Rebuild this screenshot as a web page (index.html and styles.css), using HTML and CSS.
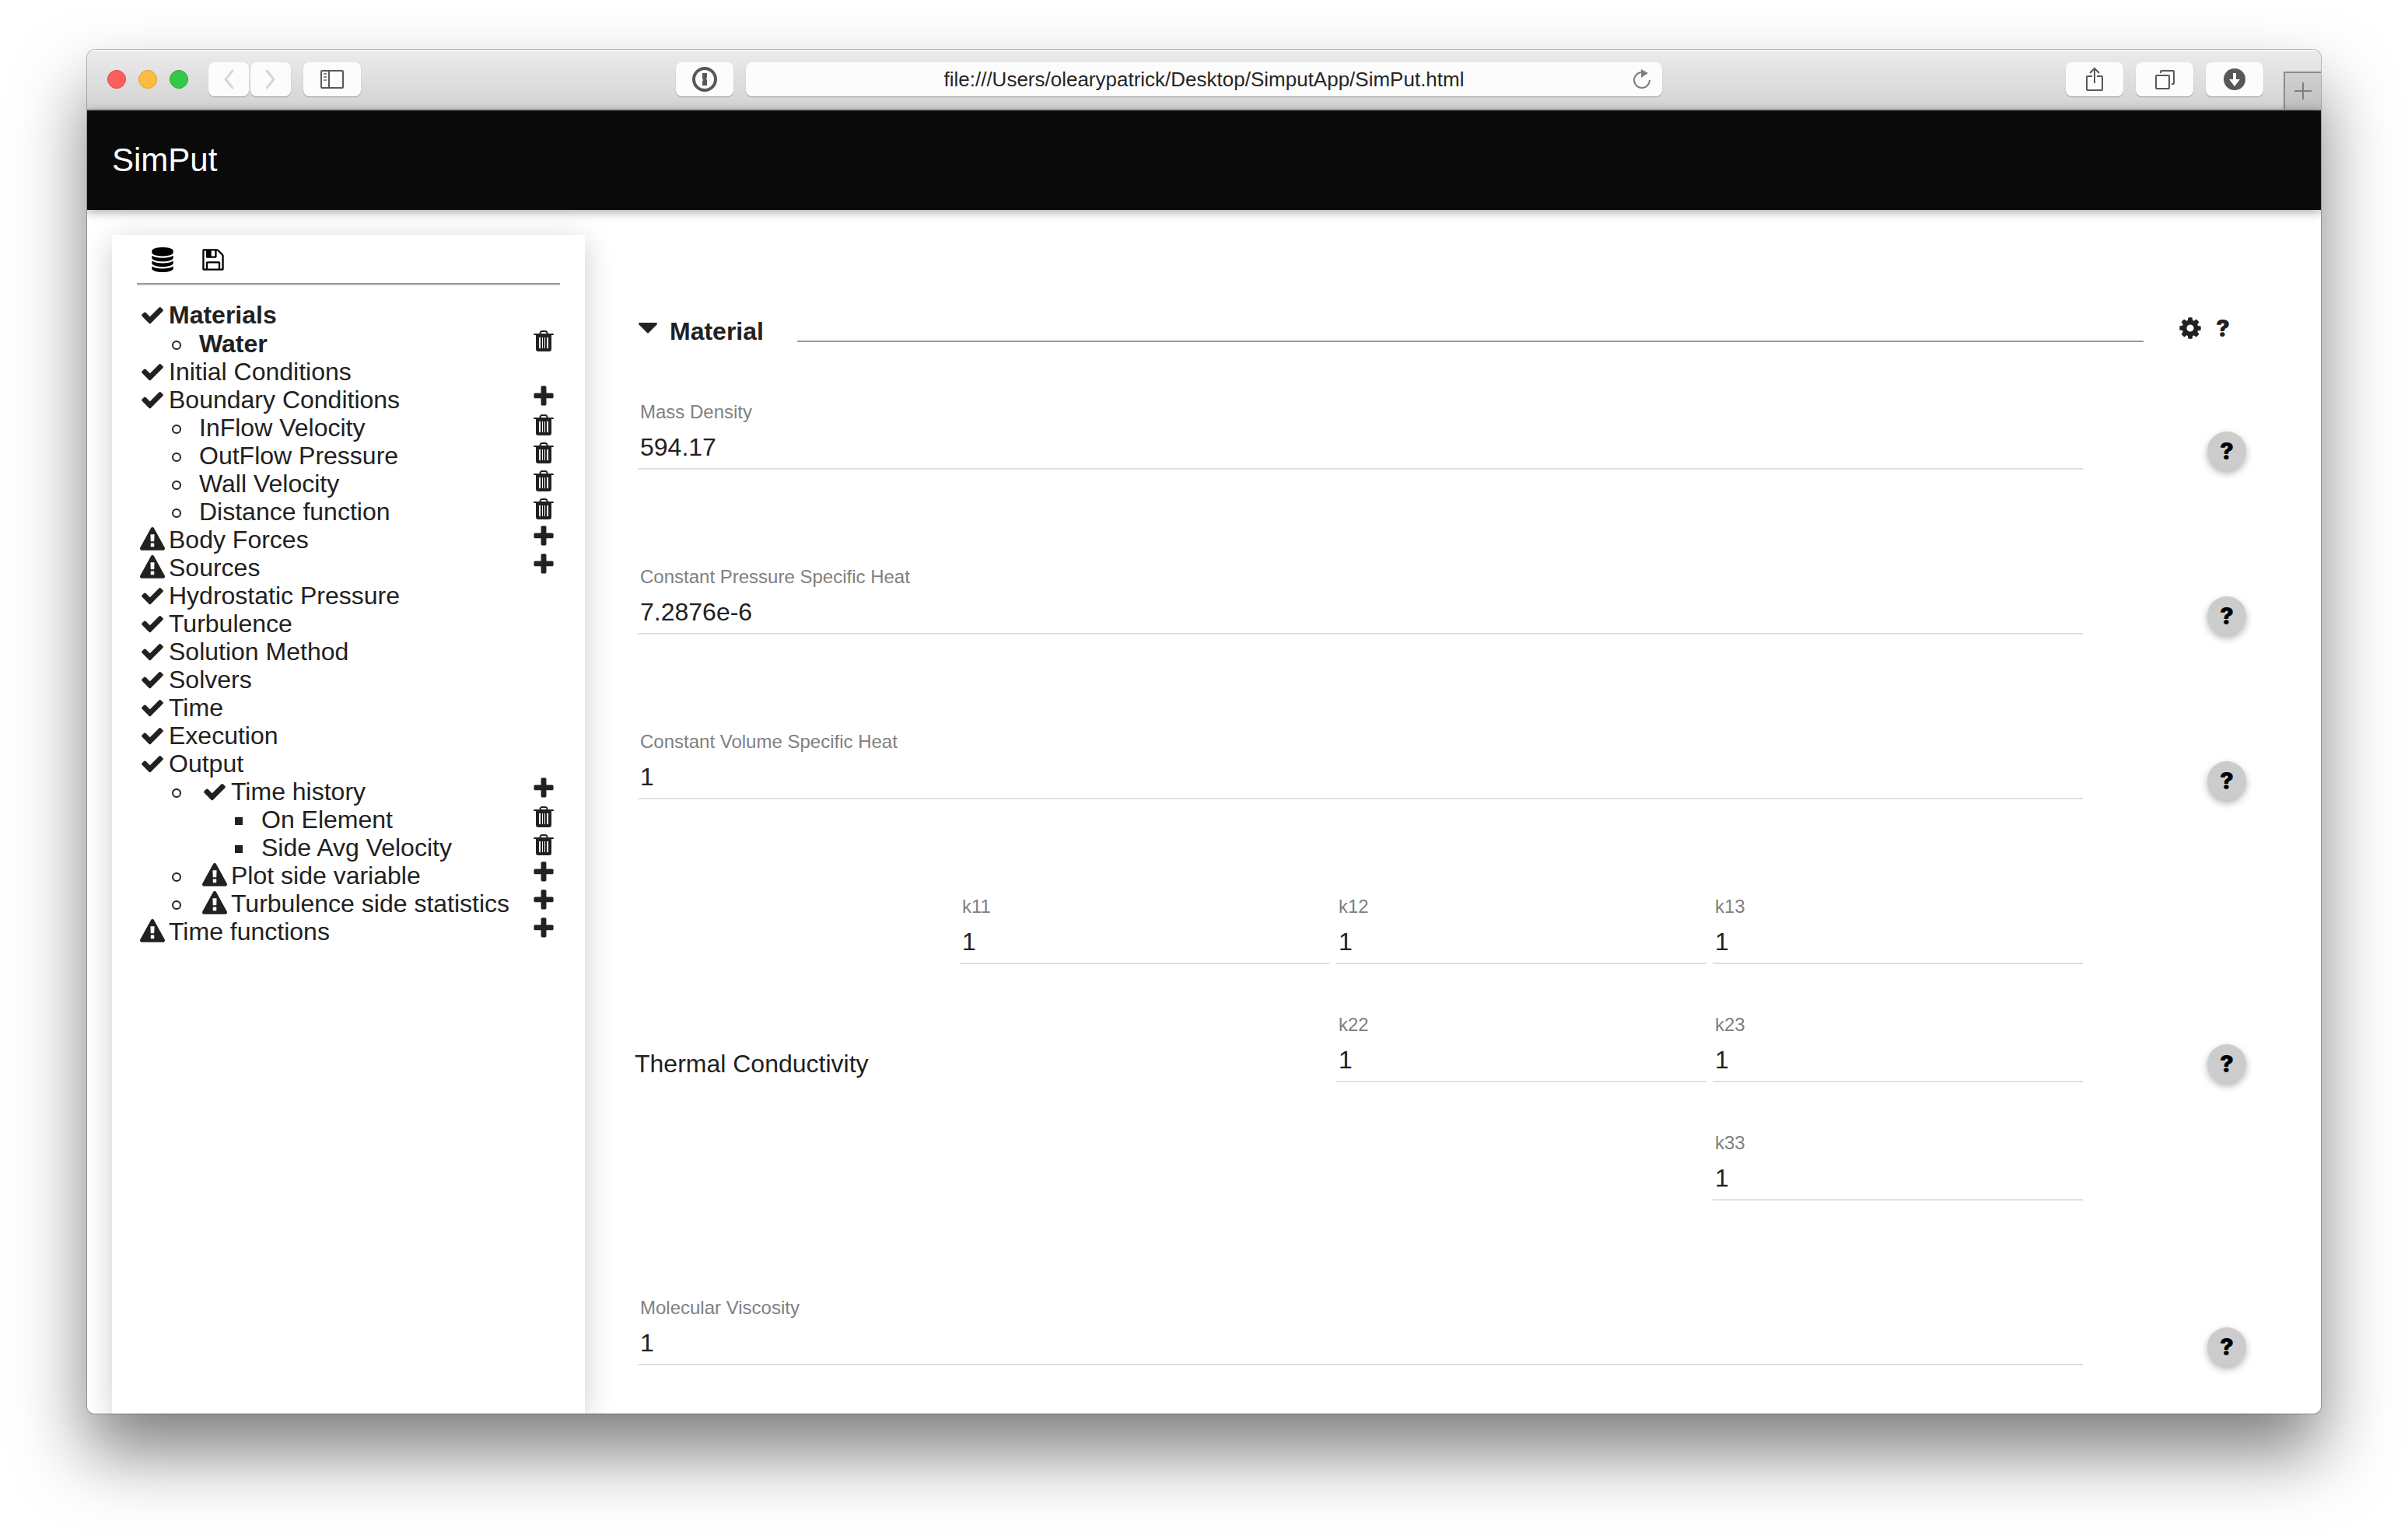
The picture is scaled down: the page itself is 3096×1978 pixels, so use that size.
FILE: index.html
```html
<!DOCTYPE html>
<html lang="en">
<head>
<meta charset="utf-8">
<title>SimPut</title>
<link rel="stylesheet" href="styles.css">
</head>

<body>
  <svg class="icon-defs" aria-hidden="true">
    <symbol id="check" viewBox="0 0 1792 1792">
      <path d="M1671 566q0 40-28 68l-724 724-136 136q-28 28-68 28t-68-28l-136-136-362-362q-28-28-28-68t28-68l136-136q28-28 68-28t68 28l294 295 656-657q28-28 68-28t68 28l136 136q28 28 28 68z"/>
    </symbol>
    <symbol id="plus" viewBox="0 0 1792 1792">
      <path d="M1600 736v192q0 40-28 68t-68 28h-416v416q0 40-28 68t-68 28h-192q-40 0-68-28t-28-68v-416h-416q-40 0-68-28t-28-68v-192q0-40 28-68t68-28h416v-416q0-40 28-68t68-28h192q40 0 68 28t28 68v416h416q40 0 68 28t28 68z"/>
    </symbol>
    <symbol id="trash" viewBox="0 0 32 32">
      <path fill-rule="evenodd" d="M4 7h24q1 0 1 1t-1 1h-2v18q0 3-3 3H9q-3 0-3-3V9H4q-1 0-1-1t1-1zM10 12v14h2V12zM14 12v14h1V12zM17 12v14h1V12zM20 12v14h2V12z"/>
      <path d="M11 8l1-3q1-1 2-1h4q1 0 2 1l1 3" fill="none" stroke="currentColor" stroke-width="2"/>
    </symbol>
    <symbol id="warning" viewBox="0 0 1792 1792">
      <path d="M1024 1375v-190q0-14-9.5-23.5t-22.5-9.5h-192q-13 0-22.5 9.5t-9.5 23.5v190q0 14 9.5 23.5t22.5 9.5h192q13 0 22.5-9.5t9.5-23.5zm-2-374l18-459q0-12-10-19-13-11-24-11h-220q-11 0-24 11-10 7-10 21l17 457q0 10 10 16.5t24 6.5h185q14 0 23.5-6.5t10.5-16.5zm-14-934l768 1408q35 63-2 126-17 29-46.5 46t-63.5 17h-1536q-34 0-63.5-17t-46.5-46q-37-63-2-126l768-1408q17-31 47-49t65-18 65 18 47 49z"/>
    </symbol>
    <symbol id="database" viewBox="0 0 1792 1792">
      <path d="M896 768q237 0 443-43t325-127v170q0 69-103 128t-280 93.5-385 34.5-385-34.5-280-93.5-103-128v-170q119 84 325 127t443 43zm0 768q237 0 443-43t325-127v170q0 69-103 128t-280 93.5-385 34.5-385-34.5-280-93.5-103-128v-170q119 84 325 127t443 43zm0-384q237 0 443-43t325-127v170q0 69-103 128t-280 93.5-385 34.5-385-34.5-280-93.5-103-128v-170q119 84 325 127t443 43zm0-1152q208 0 385 34.5t280 93.5 103 128v128q0 69-103 128t-280 93.5-385 34.5-385-34.5-280-93.5-103-128v-128q0-69 103-128t280-93.5 385-34.5z"/>
    </symbol>
    <symbol id="floppy" viewBox="0 0 1792 1792">
      <path d="M512 1536h768v-384h-768v384zm896 0h128v-896q0-14-10-38.5t-20-34.5l-281-281q-10-10-34-20t-39-10v416q0 40-28 68t-68 28h-576q-40 0-68-28t-28-68v-416h-128v1280h128v-416q0-40 28-68t68-28h832q40 0 68 28t28 68v416zm-384-928v-320q0-13-9.5-22.5t-22.5-9.5h-192q-13 0-22.5 9.5t-9.5 22.5v320q0 13 9.5 22.5t22.5 9.5h192q13 0 22.5-9.5t9.5-22.5zm640 32v928q0 40-28 68t-68 28h-1344q-40 0-68-28t-28-68v-1344q0-40 28-68t68-28h928q40 0 88 20t76 48l280 280q28 28 48 76t20 88z"/>
    </symbol>
    <symbol id="cog" viewBox="0 0 1792 1792">
      <path d="M1152 896q0-106-75-181t-181-75-181 75-75 181 75 181 181 75 181-75 75-181zm512-109v222q0 12-8 23t-20 13l-185 28q-19 54-39 91 35 50 107 138 10 12 10 25t-9 23q-27 37-99 108t-94 71q-12 0-26-9l-138-108q-44 23-91 38-16 136-29 186-7 28-36 28h-222q-14 0-24.5-8.5t-11.5-21.5l-28-184q-49-16-90-37l-141 107q-10 9-25 9-14 0-25-11-126-114-165-168-7-10-7-23 0-12 8-23 15-21 51-66.5t54-70.5q-27-50-41-99l-183-27q-13-2-21-12.5t-8-23.5v-222q0-12 8-23t19-13l186-28q14-46 39-92-40-57-107-138-10-12-10-24 0-10 9-23 26-36 98.5-107.5t94.5-71.5q13 0 26 10l138 107q44-23 91-38 16-136 29-186 7-28 36-28h222q14 0 24.5 8.5t11.5 21.5l28 184q49 16 90 37l142-107q9-9 24-9 13 0 25 10 129 119 165 170 7 8 7 22 0 12-8 23-15 21-51 66.5t-54 70.5q26 50 41 98l183 28q13 2 21 12.5t8 23.5z"/>
    </symbol>
  </svg>

  <div class="window">
    <!-- browser toolbar -->
    <div class="toolbar">
      <div class="toolbar-left">
        <div class="lights">
          <span class="light red"></span>
          <span class="light yellow"></span>
          <span class="light green"></span>
        </div>
        <div class="nav-buttons">
          <button class="tool-button narrow" aria-label="Back">
            <svg width="12" height="26" viewBox="0 0 12 26"><path d="M11 2L2 13l9 11" fill="none" stroke="#d6d6d6" stroke-width="3" stroke-linecap="round"/></svg>
          </button>
          <button class="tool-button narrow" aria-label="Forward">
            <svg width="12" height="26" viewBox="0 0 12 26"><path d="M1 2l9 11-9 11" fill="none" stroke="#d6d6d6" stroke-width="3" stroke-linecap="round"/></svg>
          </button>
        </div>
        <button class="tool-button" aria-label="Sidebar">
          <svg width="30" height="24" viewBox="0 0 30 24"><g fill="none" stroke="#585858" stroke-width="2"><rect x="1" y="1" width="28" height="22" rx="1"/><path d="M11 1v22"/></g><path d="M4 5h4M4 9h4M4 13h4" stroke="#8a8a8a" stroke-width="2"/></svg>
        </button>
        <button class="tool-button password" aria-label="1Password">
          <svg width="32" height="32" viewBox="0 0 32 32"><circle cx="16" cy="16" r="14" fill="none" stroke="#585858" stroke-width="4"/><path d="M13 8h6v5l-1 2 1 2v7h-6v-5l1-2-1-2z" fill="#585858"/></svg>
        </button>
      </div>
      <div class="address">
        <input type="text" class="address-input" aria-label="Address" value="file:///Users/olearypatrick/Desktop/SimputApp/SimPut.html">
        <button class="reload" aria-label="Reload">
          <svg width="24" height="28" viewBox="0 0 24 28"><path d="M22 15a10 10 0 1 1-10-10" fill="none" stroke="#7f7f7f" stroke-width="2"/><path d="M11 1l9 5-9 6z" fill="#7f7f7f"/></svg>
        </button>
      </div>
      <div class="toolbar-right">
        <button class="tool-button" aria-label="Share">
          <svg width="24" height="32" viewBox="0 0 24 32"><g fill="none" stroke="#585858" stroke-width="2"><path d="M9 12H3q-1 0-1 1v16q0 1 1 1h18q1 0 1-1V13q0-1-1-1h-6"/><path d="M12 21V2M6 8l6-6 6 6"/></g></svg>
        </button>
        <button class="tool-button" aria-label="Tabs">
          <svg width="26" height="26" viewBox="0 0 26 26"><g fill="none" stroke="#585858" stroke-width="2"><rect x="2" y="8" width="17" height="17" rx="1"/><path d="M8 5V3q0-1 1-1h15q1 0 1 1v15q0 1-1 1h-2"/></g></svg>
        </button>
        <button class="tool-button" aria-label="Downloads">
          <svg width="28" height="28" viewBox="0 0 28 28"><circle cx="14" cy="14" r="14" fill="#585858"/><path d="M12 6h4v8h5l-7 9-7-9h5z" fill="#fff"/></svg>
        </button>
        <button class="new-tab" aria-label="New tab">
          <svg width="22" height="22" viewBox="0 0 22 22"><path d="M11 0v22M0 11h22" stroke="#7f7f7f" stroke-width="2"/></svg>
        </button>
      </div>
    </div>

    <div class="app-bar">
      <h1 class="app-title">SimPut</h1>
    </div>

    <div class="app-body">
      <div class="paper">
        <div class="paper-tools">
          <button class="paper-button" aria-label="Database"><svg class="icon"><use href="#database"/></svg></button>
          <button class="paper-button" aria-label="Save"><svg class="icon"><use href="#floppy"/></svg></button>
        </div>
        <hr class="paper-line">
        <ul class="tree">
          <li class="row active"><svg class="icon status"><use href="#check"/></svg><a href="#">Materials</a></li>
          <li class="row active sub"><a href="#">Water</a><button class="action" aria-label="Delete"><svg class="icon"><use href="#trash"/></svg></button></li>
          <li class="row"><svg class="icon status"><use href="#check"/></svg><a href="#">Initial Conditions</a></li>
          <li class="row"><svg class="icon status"><use href="#check"/></svg><a href="#">Boundary Conditions</a><button class="action" aria-label="Add"><svg class="icon"><use href="#plus"/></svg></button></li>
          <li class="row sub"><a href="#">InFlow Velocity</a><button class="action" aria-label="Delete"><svg class="icon"><use href="#trash"/></svg></button></li>
          <li class="row sub"><a href="#">OutFlow Pressure</a><button class="action" aria-label="Delete"><svg class="icon"><use href="#trash"/></svg></button></li>
          <li class="row sub"><a href="#">Wall Velocity</a><button class="action" aria-label="Delete"><svg class="icon"><use href="#trash"/></svg></button></li>
          <li class="row sub"><a href="#">Distance function</a><button class="action" aria-label="Delete"><svg class="icon"><use href="#trash"/></svg></button></li>
          <li class="row"><svg class="icon status"><use href="#warning"/></svg><a href="#">Body Forces</a><button class="action" aria-label="Add"><svg class="icon"><use href="#plus"/></svg></button></li>
          <li class="row"><svg class="icon status"><use href="#warning"/></svg><a href="#">Sources</a><button class="action" aria-label="Add"><svg class="icon"><use href="#plus"/></svg></button></li>
          <li class="row"><svg class="icon status"><use href="#check"/></svg><a href="#">Hydrostatic Pressure</a></li>
          <li class="row"><svg class="icon status"><use href="#check"/></svg><a href="#">Turbulence</a></li>
          <li class="row"><svg class="icon status"><use href="#check"/></svg><a href="#">Solution Method</a></li>
          <li class="row"><svg class="icon status"><use href="#check"/></svg><a href="#">Solvers</a></li>
          <li class="row"><svg class="icon status"><use href="#check"/></svg><a href="#">Time</a></li>
          <li class="row"><svg class="icon status"><use href="#check"/></svg><a href="#">Execution</a></li>
          <li class="row"><svg class="icon status"><use href="#check"/></svg><a href="#">Output</a></li>
          <li class="row sub"><svg class="icon status"><use href="#check"/></svg><a href="#">Time history</a><button class="action" aria-label="Add"><svg class="icon"><use href="#plus"/></svg></button></li>
          <li class="row subsub"><a href="#">On Element</a><button class="action" aria-label="Delete"><svg class="icon"><use href="#trash"/></svg></button></li>
          <li class="row subsub"><a href="#">Side Avg Velocity</a><button class="action" aria-label="Delete"><svg class="icon"><use href="#trash"/></svg></button></li>
          <li class="row sub"><svg class="icon status"><use href="#warning"/></svg><a href="#">Plot side variable</a><button class="action" aria-label="Add"><svg class="icon"><use href="#plus"/></svg></button></li>
          <li class="row sub"><svg class="icon status"><use href="#warning"/></svg><a href="#">Turbulence side statistics</a><button class="action" aria-label="Add"><svg class="icon"><use href="#plus"/></svg></button></li>
          <li class="row"><svg class="icon status"><use href="#warning"/></svg><a href="#">Time functions</a><button class="action" aria-label="Add"><svg class="icon"><use href="#plus"/></svg></button></li>
        </ul>
      </div>

      <form class="content">
        <div class="section-header">
          <button type="button" class="action caret" aria-label="Collapse">
            <svg width="24" height="14" viewBox="0 0 24 14"><path d="M1 0h22q2 1 0 3L13 13q-1 1-2 0L1 3q-2-2 0-3z"/></svg>
          </button>
          <h2 class="section-title">Material</h2>
          <hr class="section-line">
          <button type="button" class="action" aria-label="Settings"><svg class="icon"><use href="#cog"/></svg></button>
          <button type="button" class="action question">?</button>
        </div>

        <div class="property">
          <div class="property-fields">
            <div class="field wide">
              <label for="density">Mass Density</label>
              <input type="text" id="density" value="594.17">
            </div>
          </div>
          <button type="button" class="help">?</button>
        </div>

        <div class="property">
          <div class="property-fields">
            <div class="field wide">
              <label for="cp">Constant Pressure Specific Heat</label>
              <input type="text" id="cp" value="7.2876e-6">
            </div>
          </div>
          <button type="button" class="help">?</button>
        </div>

        <div class="property">
          <div class="property-fields">
            <div class="field wide">
              <label for="cv">Constant Volume Specific Heat</label>
              <input type="text" id="cv" value="1">
            </div>
          </div>
          <button type="button" class="help">?</button>
        </div>

        <div class="property">
          <div class="property-fields">
            <div class="property-name">Thermal Conductivity</div>
            <div class="field">
              <label for="k11">k11</label>
              <input type="text" id="k11" value="1">
            </div>
            <div class="field">
              <label for="k12">k12</label>
              <input type="text" id="k12" value="1">
            </div>
            <div class="field">
              <label for="k13">k13</label>
              <input type="text" id="k13" value="1">
            </div>
            <div class="field col-2">
              <label for="k22">k22</label>
              <input type="text" id="k22" value="1">
            </div>
            <div class="field">
              <label for="k23">k23</label>
              <input type="text" id="k23" value="1">
            </div>
            <div class="field col-3">
              <label for="k33">k33</label>
              <input type="text" id="k33" value="1">
            </div>
          </div>
          <button type="button" class="help">?</button>
        </div>

        <div class="property">
          <div class="property-fields">
            <div class="field wide">
              <label for="viscosity">Molecular Viscosity</label>
              <input type="text" id="viscosity" value="1">
            </div>
          </div>
          <button type="button" class="help">?</button>
        </div>
      </form>
    </div>
  </div>
</body>
</html>
```

FILE: styles.css
```css
*,
*::before {
  box-sizing: border-box;
}
body {
  background-color: white;
  color: #212121;
  display: flex;
  flex-flow: column;
  font-family: "Liberation Sans", Helvetica, sans-serif;
  font-size: 32px;
  line-height: 36px;
  margin: 0;
  min-height: 100vh;
  padding: 64px 112px 160px;
}
button {
  align-items: center;
  background: none;
  border: none;
  color: inherit;
  cursor: pointer;
  display: flex;
  flex: none;
  justify-content: center;
  padding: 0;
}
input {
  border: none;
  font-family: inherit;
  outline: none;
}
.icon-defs {
  display: none;
}
.icon {
  fill: currentColor;
  flex: none;
  height: 32px;
  width: 32px;
}
.window {
  border-radius: 10px;
  box-shadow: 0 0 0 1px rgba(0, 0, 0, 0.25), 0 50px 90px rgba(0, 0, 0, 0.5);
  display: flex;
  flex: 1;
  flex-flow: column;
  overflow: hidden;
}

/* browser toolbar */
.toolbar {
  background: linear-gradient(#ebebeb, #d3d3d3);
  border-bottom: 2px solid #b2b2b2;
  box-shadow: inset 0 2px #f5f5f5;
  display: grid;
  grid-template-columns: 1fr 41% 1fr;
  height: 78px;
}
.toolbar-left,
.toolbar-right {
  align-items: center;
  display: flex;
  gap: 16px;
}
.toolbar-left {
  padding: 0 16px 0 26px;
}
.toolbar-right {
  justify-content: flex-end;
}
.lights {
  display: flex;
  gap: 16px;
  margin-right: 10px;
}
.light {
  border: 1px solid;
  border-radius: 50%;
  height: 24px;
  width: 24px;
}
.red {
  background-color: #fc605c;
  border-color: #e2453f;
}
.yellow {
  background-color: #fdbc40;
  border-color: #dfa034;
}
.green {
  background-color: #34c84a;
  border-color: #27aa35;
}
.nav-buttons {
  display: flex;
  gap: 2px;
}
.tool-button {
  background-color: #fcfcfc;
  border-radius: 8px;
  box-shadow: 0 1px 1px rgba(0, 0, 0, 0.3);
  height: 44px;
  width: 74px;
}
.narrow {
  width: 52px;
}
.password {
  margin-left: auto;
}
.address {
  align-items: center;
  align-self: center;
  background-color: #fcfcfc;
  border-radius: 8px;
  box-shadow: 0 1px 1px rgba(0, 0, 0, 0.3);
  display: flex;
  height: 44px;
}
.address-input {
  background: none;
  color: #262626;
  flex: 1;
  font-size: 26px;
  height: 44px;
  padding: 0 0 0 52px;
  text-align: center;
}
.reload {
  height: 44px;
  width: 52px;
}
.new-tab {
  align-self: flex-end;
  background: linear-gradient(#d0d0d0, #c0c0c0);
  border-left: 2px solid #8c8c8c;
  border-top: 2px solid #8c8c8c;
  height: 48px;
  margin-left: 10px;
  width: 48px;
}

/* app bar */
.app-bar {
  align-items: center;
  background-color: #0a0a0a;
  box-shadow: 0 2px 12px rgba(0, 0, 0, 0.4);
  display: flex;
  height: 128px;
  padding: 0 32px;
  position: relative;
}
.app-title {
  color: white;
  font-size: 42px;
  font-weight: normal;
  margin: 0;
}
.app-body {
  background-color: white;
  display: flex;
  flex: 1;
  padding-left: 32px;
}

/* tree panel */
.paper {
  background-color: white;
  box-shadow: 0 8px 36px rgba(0, 0, 0, 0.2);
  flex: none;
  margin-top: 32px;
  padding: 16px 32px;
  width: 608px;
}
.paper-tools {
  display: flex;
}
.paper-button {
  color: black;
  width: 65px;
}
.paper-line {
  border: none;
  border-bottom: 2px solid #eee;
  border-top: 2px solid #999;
  margin: 14px 0 18px;
}
.tree {
  list-style: none;
  margin: 0;
  padding: 0;
}
.row {
  align-items: center;
  display: flex;
  height: 36px;
}
.row a {
  color: inherit;
  flex: 1;
  text-decoration: none;
  white-space: nowrap;
}
.active {
  font-weight: bold;
  height: 37px;
}
.status {
  margin: 0 5px 0 4px;
}
.sub::before {
  border: 2px solid #212121;
  border-radius: 50%;
  content: "";
  height: 12px;
  margin: 4px 23px 0 45px;
  width: 12px;
}
.subsub::before {
  background-color: #212121;
  content: "";
  height: 10px;
  margin: 4px 24px 0 126px;
  width: 10px;
}
.action {
  height: 28px;
  margin: 0 5px 8px 0;
  width: 32px;
}

/* property form */
.content {
  flex: 1;
  padding: 138px 96px 0 64px;
}
.section-header {
  display: flex;
  align-items: center;
  height: 36px;
  margin-bottom: 60px;
  padding: 0 9px 0 5px;
}
.caret {
  fill: currentColor;
  margin-right: 16px;
  width: 24px;
}
.section-title {
  font-size: 32px;
  font-weight: bold;
  margin: 0;
}
.section-line {
  align-self: flex-end;
  border: none;
  border-top: 2px solid #999;
  flex: 1;
  margin: 0 44px 4px 43px;
}
.question,
.help {
  font-family: Inter, "Liberation Sans", sans-serif;
  font-size: 30px;
  font-weight: 900;
}
.question {
  margin-left: 5px;
}
.property {
  align-items: center;
  display: flex;
  margin-bottom: 60px;
}
.property:last-child {
  margin-bottom: 0;
}
.property-fields {
  align-items: center;
  display: grid;
  flex: 1;
  grid-template-columns: 414px repeat(3, 1fr);
}
.property-name {
  grid-row: 1 / span 3;
}
.field {
  display: flex;
  flex-flow: column;
  gap: 13px;
  padding: 12px 4px 52px;
}
.wide {
  grid-column: 1 / -1;
}
.col-2 {
  grid-column: 3;
}
.col-3 {
  grid-column: 4;
}
.field label {
  color: #808080;
  font-size: 24px;
  line-height: 28px;
  padding: 0 3px;
}
.field input {
  background: none;
  border-bottom: 2px solid #e0e0e0;
  color: #212121;
  font-size: 32px;
  height: 47px;
  padding: 0 3px 9px;
  width: 100%;
}
.help {
  background-color: #ccc;
  border-radius: 50%;
  box-shadow: 0 4px 10px rgba(0, 0, 0, 0.3);
  color: black;
  height: 50px;
  margin-left: 156px;
  width: 50px;
}
```
